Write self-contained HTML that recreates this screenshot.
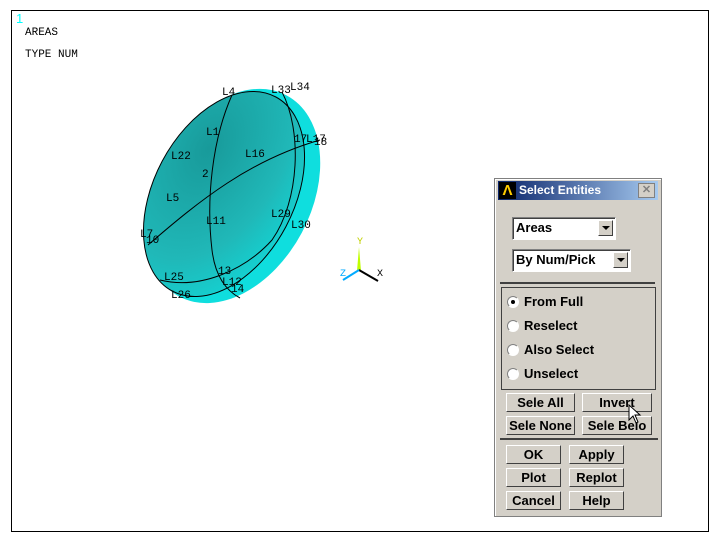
<!DOCTYPE html>
<html><head><style>
body{margin:0;width:720px;height:546px;background:#fff;position:relative;overflow:hidden;font-family:"Liberation Sans",sans-serif}
.frame{position:absolute;left:11px;top:10px;width:696px;height:520px;border:1px solid #000}
.mono{position:absolute;font-family:"Liberation Mono",monospace;font-size:11px;color:#000}
.dlg{position:absolute;left:494px;top:178px;width:166px;height:337px;background:#d4d0c8;border:1px solid #808080;box-shadow:inset 1px 1px #fff}
.title{position:absolute;left:3px;top:2px;width:160px;height:19px;background:linear-gradient(90deg,#0a246a,#a6caf0);color:#fff;font-weight:bold;font-size:12px;line-height:19px}
.abs{position:absolute}
.combo{position:absolute;background:#fff;border:1px solid;border-color:#808080 #fff #fff #808080;box-shadow:inset 1px 1px #404040;font-size:13px;font-weight:bold;line-height:20px;padding-left:3px;box-sizing:border-box}
.arr{position:absolute;right:2px;top:2px;width:15px;height:16px;background:#d4d0c8;border:1px solid;border-color:#fff #404040 #404040 #fff;box-sizing:border-box}
.arr:after{content:"";position:absolute;left:3px;top:5px;border-left:4px solid transparent;border-right:4px solid transparent;border-top:4px solid #000}
.btn{position:absolute;height:19px;border:1px solid;border-color:#fff #404040 #404040 #fff;box-sizing:border-box;font-size:13px;font-weight:bold;text-align:center;line-height:17px;background:#d4d0c8}
.rad{position:absolute;left:12px;font-size:13px;font-weight:bold}
.rad i{position:absolute;left:0;top:2px;width:10px;height:10px;border-radius:50%;background:#fff;border:1px solid;border-color:#808080 #fff #fff #808080}
.rad span{position:absolute;left:17px;top:0;white-space:nowrap}
.sep{position:absolute;left:5px;width:155px;height:2px;background:#404040}
</style></head><body>
<div class="frame"></div>
<div class="mono" style="left:16px;top:11px;color:#0ff;font-size:13px;font-family:'Liberation Sans',sans-serif">1</div>
<div class="mono" style="left:25px;top:27px">AREAS</div>
<div class="mono" style="left:25px;top:49px">TYPE NUM</div>
<svg class="abs" style="left:0;top:0" width="720" height="546">
<defs><radialGradient id="g" cx="0.25" cy="0.35" r="0.9"><stop offset="0" stop-color="#189a9a"/><stop offset="0.6" stop-color="#20b8b8"/><stop offset="1" stop-color="#10dada"/></radialGradient></defs>
<ellipse cx="233" cy="196" rx="78" ry="114" transform="rotate(28 233 196)" fill="#0fdede"/>
<ellipse cx="224" cy="194" rx="70" ry="110" transform="rotate(28 224 194)" fill="url(#g)" stroke="#000" stroke-width="1"/>
<path d="M232,95 C212,140 206,200 212,250 C215,275 225,290 240,298" fill="none" stroke="#000"/>
<path d="M148,245 C200,200 250,160 320,140" fill="none" stroke="#000"/>
<path d="M282,92 C302,130 300,200 272,240 C245,270 200,290 160,280" fill="none" stroke="#000"/>
<g font-family="Liberation Mono,monospace" font-size="11" fill="#000">
<text x="222" y="95">L4</text><text x="271" y="93">L33</text><text x="290" y="90">L34</text>
<text x="206" y="135">L1</text><text x="294" y="142">17</text><text x="306" y="142">L17</text><text x="314" y="145">18</text>
<text x="171" y="159">L22</text><text x="245" y="157">L16</text><text x="202" y="177">2</text>
<text x="166" y="201">L5</text><text x="206" y="224">L11</text><text x="271" y="217">L29</text><text x="291" y="228">L30</text>
<text x="140" y="237">L7</text><text x="146" y="243">10</text><text x="218" y="274">13</text>
<text x="164" y="280">L25</text><text x="222" y="285">L12</text><text x="231" y="292">14</text><text x="171" y="298">L26</text>
</g>
<path d="M359,247 L357,271 L361,271 Z" fill="#c0ff00"/>
<path d="M359,270 L378,281" stroke="#000" stroke-width="2"/>
<path d="M359,270 L343,280" stroke="#0af" stroke-width="2"/>
<text x="357" y="244" font-size="10" fill="#c0d000" font-family="Liberation Mono,monospace">Y</text>
<text x="377" y="276" font-size="10" fill="#000" font-family="Liberation Mono,monospace">X</text>
<text x="340" y="276" font-size="10" fill="#0af" font-family="Liberation Mono,monospace">Z</text>
</svg>
<div class="dlg">
<div class="title"><span style="position:absolute;left:1px;top:1px;width:17px;height:17px;background:#000;color:#fc0;text-align:center;line-height:18px;font-size:15px">Λ</span><span style="position:absolute;left:21px">Select Entities</span>
<span style="position:absolute;right:3px;top:2px;width:15px;height:13px;background:#d4d0c8;border:1px solid #808080;color:#808080;font-size:11px;line-height:12px;text-align:center">✕</span></div>
<div class="combo" style="left:17px;top:38px;width:104px;height:23px">Areas<div class="arr"></div></div>
<div class="combo" style="left:17px;top:70px;width:119px;height:23px">By Num/Pick<div class="arr"></div></div>
<div class="sep" style="top:103px"></div>
<div class="abs" style="left:6px;top:108px;width:153px;height:101px;border:1px solid #404040"></div>
<div class="rad" style="top:115px"><i></i><b style="position:absolute;left:4px;top:6px;width:4px;height:4px;background:#000;border-radius:50%"></b><span>From Full</span></div>
<div class="rad" style="top:139px"><i></i><span>Reselect</span></div>
<div class="rad" style="top:163px"><i></i><span>Also Select</span></div>
<div class="rad" style="top:187px"><i></i><span>Unselect</span></div>
<div class="btn" style="left:11px;top:214px;width:69px">Sele All</div>
<div class="btn" style="left:87px;top:214px;width:70px">Invert</div>
<div class="btn" style="left:11px;top:237px;width:69px">Sele None</div>
<div class="btn" style="left:87px;top:237px;width:70px">Sele Belo</div>
<div class="sep" style="top:259px;width:158px"></div>
<div class="btn" style="left:11px;top:266px;width:55px">OK</div>
<div class="btn" style="left:74px;top:266px;width:55px">Apply</div>
<div class="btn" style="left:11px;top:289px;width:55px">Plot</div>
<div class="btn" style="left:74px;top:289px;width:55px">Replot</div>
<div class="btn" style="left:11px;top:312px;width:55px">Cancel</div>
<div class="btn" style="left:74px;top:312px;width:55px">Help</div>
<svg class="abs" style="left:133px;top:225px" width="14" height="22"><path d="M1,1 L1,16 L5,12 L8,19 L10,18 L7,11 L12,11 Z" fill="#fff" stroke="#000"/></svg>
</div>
</body></html>
